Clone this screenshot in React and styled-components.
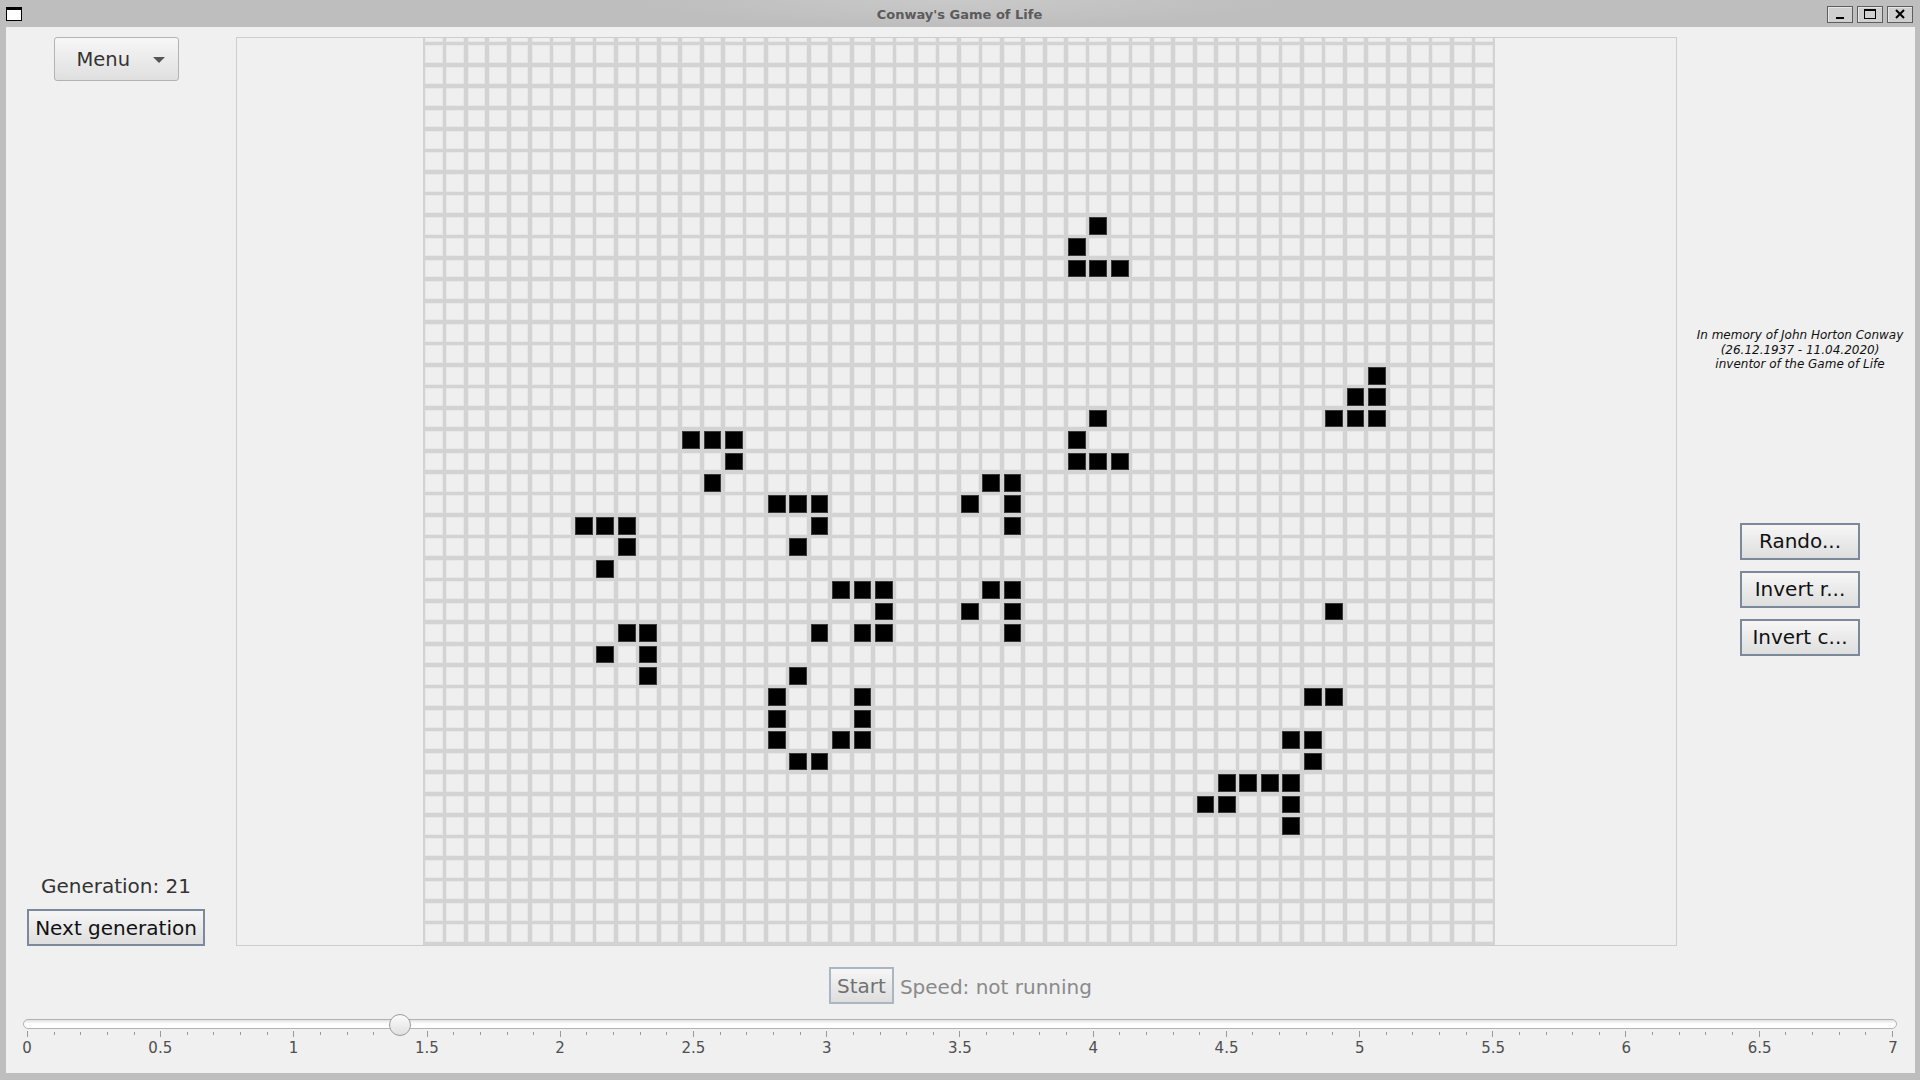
import React from 'react';
import styled, { createGlobalStyle } from 'styled-components';

const Global = createGlobalStyle`
  html, body {
    margin: 0;
    padding: 0;
    background: #bebebe;
  }
  * {
    box-sizing: border-box;
  }
  body {
    font-family: "DejaVu Sans", "Liberation Sans", sans-serif;
  }
`;

const COLS = 50;
const ROWS = 44;
const SPEED = 1.4;

// visible board cells, [col, row] with row 0 = first full row
const LIVE = [
  [31, 8], [30, 9], [30, 10], [31, 10], [32, 10],
  [44, 15], [43, 16], [44, 16], [42, 17], [43, 17], [44, 17],
  [31, 17], [30, 18], [30, 19], [31, 19], [32, 19],
  [12, 18], [13, 18], [14, 18], [14, 19], [13, 20],
  [26, 20], [27, 20], [25, 21], [27, 21], [27, 22],
  [16, 21], [17, 21], [18, 21], [18, 22], [17, 23],
  [7, 22], [8, 22], [9, 22], [9, 23], [8, 24],
  [19, 25], [20, 25], [21, 25], [21, 26], [20, 27], [21, 27], [18, 27],
  [26, 25], [27, 25], [25, 26], [27, 26], [27, 27],
  [42, 26],
  [9, 27], [10, 27], [8, 28], [10, 28], [10, 29],
  [17, 29], [16, 30], [20, 30], [16, 31], [20, 31], [16, 32], [19, 32], [20, 32], [17, 33], [18, 33],
  [41, 30], [42, 30], [40, 32], [41, 32], [41, 33],
  [37, 34], [38, 34], [39, 34], [40, 34], [36, 35], [37, 35], [40, 35], [40, 36],
];
const liveSet = new Set(LIVE.map(([c, r]) => `${c}:${r + 1}`));

const Window = styled.div`
  width: 1920px;
  height: 1080px;
  display: flex;
  flex-direction: column;
  background: #bebebe;
  overflow: hidden;
`;

const TitleBar = styled.div`
  height: 27px;
  flex: none;
  display: grid;
  grid-template-columns: 1fr auto 1fr;
  align-items: center;
  padding: 0 7px 0 6px;
  background: radial-gradient(ellipse 320px 26px at 50% 0%, #c9c9c9, #bebebe);
`;

const Title = styled.div`
  font-size: 13px;
  font-weight: bold;
  color: #5b5b5b;
  padding-top: 1px;
`;

const WinIcon = styled.div`
  width: 16px;
  height: 14px;
  border: 1px solid #000;
  border-top-width: 3px;
  background: #fff;
`;

const TitleButtons = styled.div`
  display: flex;
  justify-content: flex-end;
  gap: 4px;
  padding-top: 1px;
`;

const TitleButton = styled.div`
  width: 26px;
  height: 17px;
  border: 1px solid #5e5e5e;
  background: #cfcfcf;
  box-shadow: inset 1px 1px 0 #e6e6e6;
  display: flex;
  align-items: center;
  justify-content: center;
`;

const Frame = styled.div`
  flex: 1;
  padding: 0 5px 7px 6px;
  display: flex;
`;

const Content = styled.div`
  flex: 1;
  background: #f0f0f0;
  display: flex;
  flex-direction: column;
  padding-top: 10px;
`;

const TopRow = styled.div`
  display: grid;
  grid-template-columns: 220px 1441px 1fr;
  height: 909px;
`;

const LeftCol = styled.div`
  display: flex;
  flex-direction: column;
  align-items: center;
  justify-content: space-between;
`;

const MenuButton = styled.div`
  width: 125px;
  height: 44px;
  border: 1px solid #b3b3b3;
  border-radius: 3px;
  background: linear-gradient(to bottom, #f7f7f7, #dfdfdf);
  display: flex;
  align-items: center;
  padding: 1px 0 0 22px;
  gap: 23px;
  font-size: 19.5px;
  color: #333;
`;

const Arrow = styled.div`
  width: 0;
  height: 0;
  border-left: 6px solid transparent;
  border-right: 6px solid transparent;
  border-top: 6px solid #555;
  margin-top: 1px;
`;

const GenBox = styled.div`
  display: flex;
  flex-direction: column;
  align-items: center;
  gap: 11px;
`;

const GenLabel = styled.div`
  font-size: 20px;
  line-height: 24px;
  color: #333;
`;

const Button = styled.div`
  height: 37px;
  ${(p) => (p.$width ? `width: ${p.$width}px;` : 'padding: 0 6px;')}
  border: 2px solid ${(p) => (p.$disabled ? '#aab6c2' : '#7b899a')};
  background: linear-gradient(to bottom, #f6f6f6, #dedede);
  display: flex;
  align-items: center;
  justify-content: center;
  font-size: 20px;
  color: ${(p) => (p.$disabled ? '#717171' : '#111')};
  white-space: nowrap;
`;

const Board = styled.div`
  margin-left: 10px;
  width: 1441px;
  height: 909px;
  border: 1px solid #cdcdcd;
  overflow: hidden;
`;

const Grid = styled.div`
  margin: -16px 0 0 186px;
  width: max-content;
  display: grid;
  grid-template-columns: repeat(${COLS}, 17.76px);
  grid-auto-rows: 17.76px;
  gap: 3.7px;
  padding: 1.85px;
  background: #d3d3d3;
`;

const Cell = styled.div`
  background: ${(p) => (p.$alive ? '#000' : '#efefef')};
  box-shadow: inset 0 0 0 1px ${(p) => (p.$alive ? '#3a3a3a' : '#e7e7e7')};
`;

const RightCol = styled.div`
  margin-left: 10px;
  padding-left: 8px;
  display: flex;
  flex-direction: column;
  align-items: center;
`;

const Memorial = styled.div`
  margin-top: 291px;
  font-size: 12px;
  line-height: 14.5px;
  font-style: italic;
  text-align: center;
  color: #111;
`;

const ActionList = styled.div`
  margin-top: 151px;
  display: flex;
  flex-direction: column;
  gap: 11px;
`;

const Controls = styled.div`
  margin-top: 21px;
  display: flex;
  justify-content: center;
  align-items: center;
  gap: 6px;
`;

const SpeedLabel = styled.div`
  font-size: 20px;
  color: #8a8a8a;
  padding-top: 2px;
`;

const Slider = styled.div`
  margin: 14px 18px 0 17px;
`;

const Track = styled.div`
  height: 10px;
  margin-top: 1px;
  border: 1px solid #b2b2b2;
  border-radius: 5px;
  background: linear-gradient(to bottom, #e2e2e2, #fdfdfd 45%, #ffffff);
`;

const Scale = styled.div`
  position: relative;
  margin: 0 4px 0 4px;
`;

const Thumb = styled.div`
  position: absolute;
  top: -17px;
  width: 22px;
  height: 22px;
  margin-left: -11px;
  border-radius: 50%;
  border: 1px solid #9c9c9c;
  background: linear-gradient(to bottom, #fbfbfb, #e0e0e0);
`;

const Ticks = styled.div`
  margin-top: 2px;
  height: 6px;
  display: flex;
  justify-content: space-between;
  align-items: flex-start;
`;

const Tick = styled.div`
  width: 1px;
  height: ${(p) => (p.$major ? 6 : 3)}px;
  margin-top: ${(p) => (p.$major ? 0 : 1)}px;
  background: #9a9a9a;
`;

const Labels = styled.div`
  margin-top: 2px;
  display: flex;
  justify-content: space-between;
`;

const Label = styled.div`
  width: 0;
  display: flex;
  justify-content: center;
  font-size: 15px;
  line-height: 18px;
  color: #4f4f4f;
  white-space: nowrap;
`;

function LifeBoard() {
  const cells = [];
  for (let r = 0; r < ROWS; r++) {
    for (let c = 0; c < COLS; c++) {
      cells.push(<Cell key={`${c}-${r}`} $alive={liveSet.has(`${c}:${r}`)} />);
    }
  }
  return (
    <Board>
      <Grid>{cells}</Grid>
    </Board>
  );
}

export default function App() {
  const ticks = Array.from({ length: 71 }, (_, i) => i);
  const labels = Array.from({ length: 15 }, (_, i) => i / 2);

  return (
    <Window>
      <Global />
      <TitleBar>
        <WinIcon />
        <Title>Conway's Game of Life</Title>
        <TitleButtons>
          <TitleButton>
            <svg width="10" height="12" viewBox="0 0 10 12">
              <rect x="1" y="9" width="8" height="2" fill="#000" />
            </svg>
          </TitleButton>
          <TitleButton>
            <svg width="14" height="12" viewBox="0 0 14 12">
              <rect x="1.5" y="1.5" width="11" height="9" fill="none" stroke="#000" />
              <rect x="1" y="1" width="12" height="2" fill="#000" />
            </svg>
          </TitleButton>
          <TitleButton>
            <svg width="12" height="12" viewBox="0 0 12 12">
              <path d="M2 2 L10 10 M10 2 L2 10" stroke="#000" strokeWidth="2" />
            </svg>
          </TitleButton>
        </TitleButtons>
      </TitleBar>
      <Frame>
        <Content>
          <TopRow>
            <LeftCol>
              <MenuButton>
                Menu
                <Arrow />
              </MenuButton>
              <GenBox>
                <GenLabel>Generation: 21</GenLabel>
                <Button $width={178}>Next generation</Button>
              </GenBox>
            </LeftCol>
            <LifeBoard />
            <RightCol>
              <Memorial>
                In memory of John Horton Conway
                <br />
                (26.12.1937 - 11.04.2020)
                <br />
                inventor of the Game of Life
              </Memorial>
              <ActionList>
                <Button $width={120}>Rando...</Button>
                <Button $width={120}>Invert r...</Button>
                <Button $width={120}>Invert c...</Button>
              </ActionList>
            </RightCol>
          </TopRow>
          <Controls>
            <Button $disabled>Start</Button>
            <SpeedLabel>Speed: not running</SpeedLabel>
          </Controls>
          <Slider>
            <Track />
            <Scale>
              <Thumb style={{ left: `${(SPEED / 7) * 100}%` }} />
              <Ticks>
                {ticks.map((i) => (
                  <Tick key={i} $major={i % 5 === 0} />
                ))}
              </Ticks>
              <Labels>
                {labels.map((v) => (
                  <Label key={v}>{v}</Label>
                ))}
              </Labels>
            </Scale>
          </Slider>
        </Content>
      </Frame>
    </Window>
  );
}
